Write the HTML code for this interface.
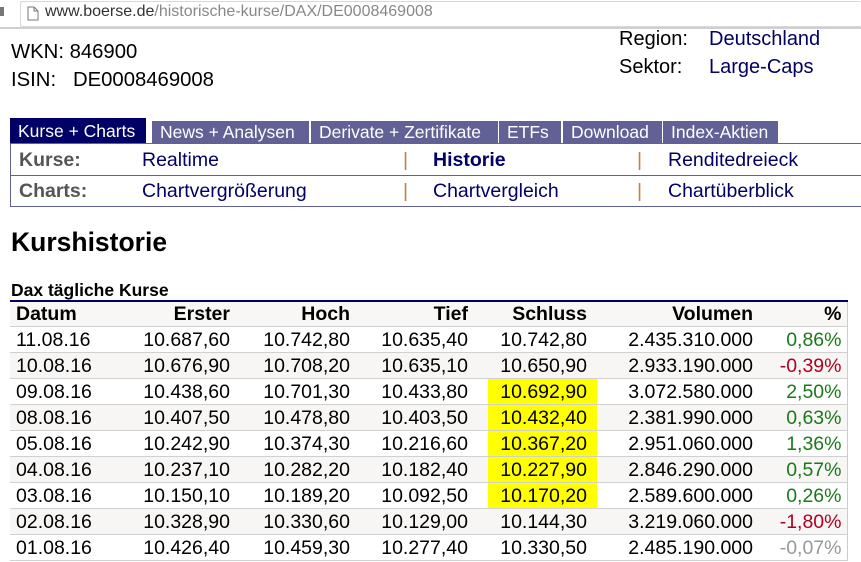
<!DOCTYPE html>
<html><head><meta charset="utf-8"><style>
*{margin:0;padding:0;box-sizing:border-box}
body{width:861px;height:562px;overflow:hidden;background:#fff;font-family:"Liberation Sans",Arial,sans-serif;position:relative;color:#000}
.a{position:absolute;white-space:nowrap}
.tab{position:absolute;top:121px;height:22px;background:#616196;color:#fff;font-size:17.5px;line-height:22px;padding-left:8px}
.lnk{color:#000066}
.sep{color:#c08040}
.m{font-size:19.5px}
table{position:absolute;left:10px;top:300px;width:837px;border-collapse:collapse;font-size:19.5px;border-top:2px solid #000066;border-right:1px solid #ccc;table-layout:fixed}
td,th{height:26px;border-bottom:1px solid #d0d0d0;text-align:right;padding:0;line-height:24px;white-space:nowrap;overflow:visible}
th{background:#f8f7f6;font-weight:bold;height:25px}
tr.g td{background:#f7f6f5}
td:first-child,th:first-child{text-align:left;padding-left:6px}
.up{color:#1a7a1a}.dn{color:#b00020}.nt{color:#999}
</style></head><body>
<div class="a" style="left:0;top:0;width:861px;height:29px;background:#fff;border-bottom:2px solid #cfcfcf"></div>
<div class="a" style="left:20px;top:1px;width:841px;height:26px;border:1px solid #d8d8d8;border-right:none;border-radius:2px"></div>
<svg class="a" style="left:27px;top:6px" width="12" height="15" viewBox="0 0 12 15"><path d="M1 1h6l4 4v9H1z M7 1v4h4" fill="none" stroke="#777" stroke-width="1"/></svg>
<div class="a" style="left:0;top:7px;width:4px;height:9px;background:#777"></div>
<div class="a" style="left:45px;top:3px;font-size:16px;color:#333">www.boerse.de<span style="color:#888">/historische-kurse/DAX/DE0008469008</span></div>
<div class="a" style="left:11px;top:41px;font-size:20.3px">WKN: 846900</div>
<div class="a" style="left:11px;top:69px;font-size:20.3px">ISIN:&nbsp;&nbsp; DE0008469008</div>
<div class="a" style="left:619px;top:28px;font-size:20px">Region:</div>
<div class="a lnk" style="left:709px;top:28px;font-size:20px">Deutschland</div>
<div class="a" style="left:619px;top:56px;font-size:20px">Sektor:</div>
<div class="a lnk" style="left:709px;top:56px;font-size:20px">Large-Caps</div>

<div class="tab" style="left:10px;top:118px;height:25px;width:136px;background:#000066;line-height:27px">Kurse + Charts</div>
<div class="tab" style="left:152px;width:157px">News + Analysen</div>
<div class="tab" style="left:311px;width:187px">Derivate + Zertifikate</div>
<div class="tab" style="left:499px;width:62px">ETFs</div>
<div class="tab" style="left:563px;width:99px">Download</div>
<div class="tab" style="left:663px;width:115px">Index-Aktien</div>
<div class="a" style="left:10px;top:143px;width:851px;height:64px;border:1px solid #616196;border-right:none"></div>
<div class="a" style="left:10px;top:175px;width:851px;height:1px;background:#616196"></div>
<div class="a m" style="left:19px;top:149px;font-weight:bold;color:#555">Kurse:</div>
<div class="a lnk m" style="left:142px;top:149px">Realtime</div>
<div class="a sep m" style="left:403px;top:149px">|</div>
<div class="a lnk m" style="left:433px;top:149px;font-weight:bold">Historie</div>
<div class="a sep m" style="left:637px;top:149px">|</div>
<div class="a lnk m" style="left:668px;top:149px">Renditedreieck</div>
<div class="a m" style="left:19px;top:180px;font-weight:bold;color:#555">Charts:</div>
<div class="a lnk m" style="left:142px;top:180px">Chartvergrößerung</div>
<div class="a sep m" style="left:403px;top:180px">|</div>
<div class="a lnk m" style="left:433px;top:180px">Chartvergleich</div>
<div class="a sep m" style="left:637px;top:180px">|</div>
<div class="a lnk m" style="left:668px;top:180px">Chartüberblick</div>

<div class="a" style="left:11px;top:227px;font-size:26.5px;font-weight:bold">Kurshistorie</div>
<div class="a" style="left:11px;top:280px;font-size:17.5px;font-weight:bold">Dax tägliche Kurse</div>

<table>
<colgroup><col style="width:110px"><col style="width:110px"><col style="width:120px"><col style="width:118px"><col style="width:129px"><col style="width:156px"><col style="width:94px"></colgroup>
<tr><th>Datum</th><th>Erster</th><th>Hoch</th><th>Tief</th><th style="padding-right:10px">Schluss</th><th>Volumen</th><th style="padding-right:5px">%</th></tr>
<tr><td>11.08.16</td><td>10.687,60</td><td>10.742,80</td><td>10.635,40</td><td style="padding-right:10px">10.742,80</td><td>2.435.310.000</td><td class="up" style="padding-right:5px">0,86%</td></tr>
<tr class="g"><td>10.08.16</td><td>10.676,90</td><td>10.708,20</td><td>10.635,10</td><td style="padding-right:10px">10.650,90</td><td>2.933.190.000</td><td class="dn" style="padding-right:5px">-0,39%</td></tr>
<tr><td>09.08.16</td><td>10.438,60</td><td>10.701,30</td><td>10.433,80</td><td style="padding-right:10px;background:linear-gradient(90deg,transparent 20px,#ff0 20px)">10.692,90</td><td>3.072.580.000</td><td class="up" style="padding-right:5px">2,50%</td></tr>
<tr class="g"><td>08.08.16</td><td>10.407,50</td><td>10.478,80</td><td>10.403,50</td><td style="padding-right:10px;background:linear-gradient(90deg,#f7f6f5 20px,#ff0 20px)">10.432,40</td><td>2.381.990.000</td><td class="up" style="padding-right:5px">0,63%</td></tr>
<tr><td>05.08.16</td><td>10.242,90</td><td>10.374,30</td><td>10.216,60</td><td style="padding-right:10px;background:linear-gradient(90deg,transparent 20px,#ff0 20px)">10.367,20</td><td>2.951.060.000</td><td class="up" style="padding-right:5px">1,36%</td></tr>
<tr class="g"><td>04.08.16</td><td>10.237,10</td><td>10.282,20</td><td>10.182,40</td><td style="padding-right:10px;background:linear-gradient(90deg,#f7f6f5 20px,#ff0 20px)">10.227,90</td><td>2.846.290.000</td><td class="up" style="padding-right:5px">0,57%</td></tr>
<tr><td>03.08.16</td><td>10.150,10</td><td>10.189,20</td><td>10.092,50</td><td style="padding-right:10px;background:linear-gradient(90deg,transparent 20px,#ff0 20px)">10.170,20</td><td>2.589.600.000</td><td class="up" style="padding-right:5px">0,26%</td></tr>
<tr class="g"><td>02.08.16</td><td>10.328,90</td><td>10.330,60</td><td>10.129,00</td><td style="padding-right:10px">10.144,30</td><td>3.219.060.000</td><td class="dn" style="padding-right:5px">-1,80%</td></tr>
<tr><td>01.08.16</td><td>10.426,40</td><td>10.459,30</td><td>10.277,40</td><td style="padding-right:10px">10.330,50</td><td>2.485.190.000</td><td class="nt" style="padding-right:5px">-0,07%</td></tr>
</table>
</body></html>
